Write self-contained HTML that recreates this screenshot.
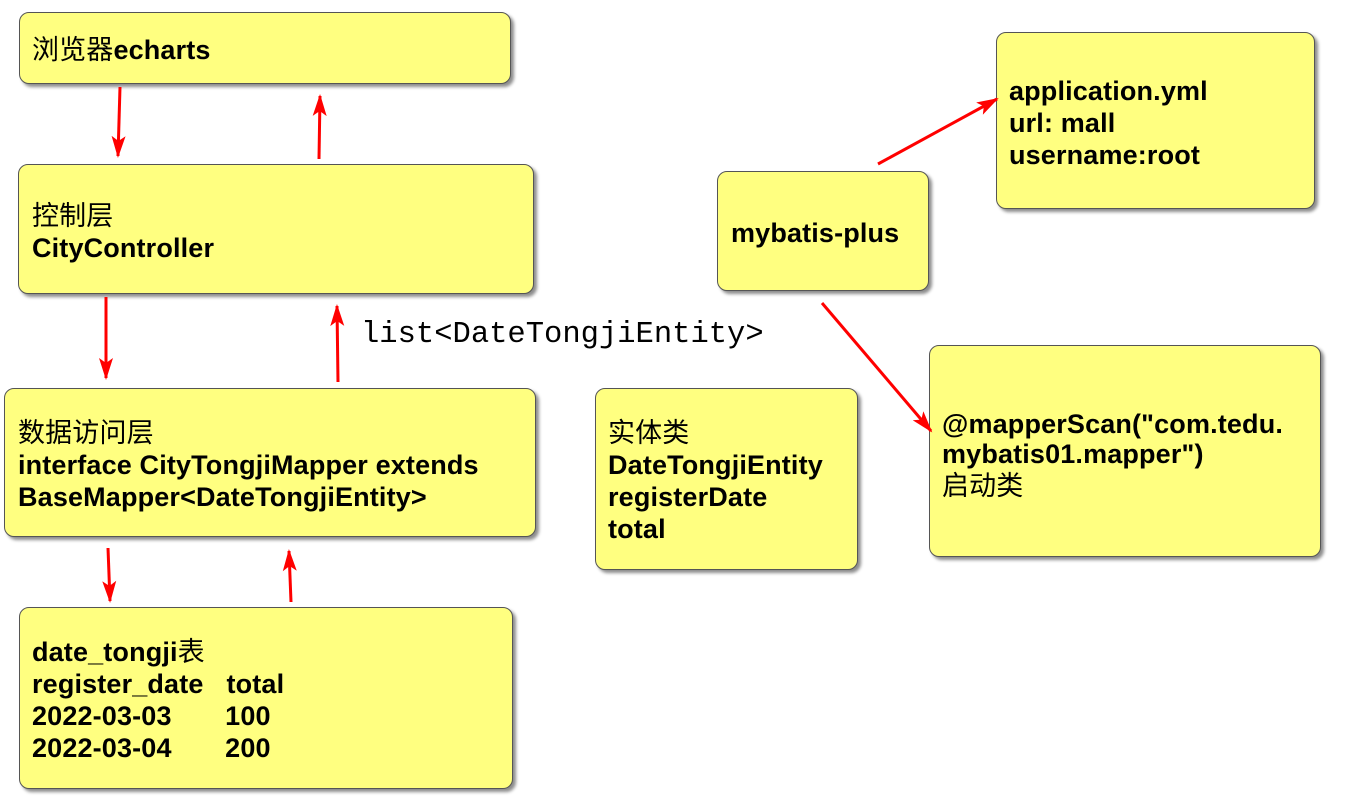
<!DOCTYPE html>
<html><head><meta charset="utf-8"><style>
body{margin:0;width:1363px;height:802px;background:#fff;position:relative;overflow:hidden;font-family:"Liberation Sans","Noto Sans CJK SC",sans-serif;}
.b{position:absolute;background:#ffff80;border:1px solid #555;border-radius:10px;box-shadow:3px 3px 3px rgba(0,0,0,0.45);box-sizing:border-box;}
.t{position:absolute;font-size:27px;font-weight:bold;line-height:30px;white-space:pre;color:#000;letter-spacing:0.15px;}
.c{font-weight:normal;}
</style></head><body>
<div class="b" style="left:19px;top:12px;width:492px;height:72px"></div>
<div class="b" style="left:18px;top:164px;width:516px;height:130px"></div>
<div class="b" style="left:4px;top:388px;width:532px;height:149px"></div>
<div class="b" style="left:19px;top:607px;width:494px;height:182px"></div>
<div class="b" style="left:717px;top:171px;width:212px;height:120px"></div>
<div class="b" style="left:996px;top:32px;width:319px;height:177px"></div>
<div class="b" style="left:595px;top:388px;width:263px;height:182px"></div>
<div class="b" style="left:929px;top:345px;width:392px;height:212px"></div>

<div class="t" style="left:32px;top:35px"><span class="c">浏览器</span>echarts</div>
<div class="t c" style="left:32px;top:201px">控制层</div>
<div class="t" style="left:32px;top:233px">CityController</div>
<div class="t c" style="left:18px;top:418px">数据访问层</div>
<div class="t" style="left:18px;top:450px">interface CityTongjiMapper extends</div>
<div class="t" style="left:18px;top:482px">BaseMapper&lt;DateTongjiEntity&gt;</div>
<div class="t" style="left:32px;top:637px">date_tongji<span class="c">表</span></div>
<div class="t" style="left:32px;top:669px">register_date   total</div>
<div class="t" style="left:32px;top:701px">2022-03-03       100</div>
<div class="t" style="left:32px;top:733px">2022-03-04       200</div>
<div class="t" style="left:731px;top:218px">mybatis-plus</div>
<div class="t" style="left:1009px;top:76px">application.yml</div>
<div class="t" style="left:1009px;top:108px">url: mall</div>
<div class="t" style="left:1009px;top:140px">username:root</div>
<div class="t c" style="left:608px;top:418px">实体类</div>
<div class="t" style="left:608px;top:450px">DateTongjiEntity</div>
<div class="t" style="left:608px;top:482px">registerDate</div>
<div class="t" style="left:608px;top:514px">total</div>
<div class="t" style="left:942px;top:409px">@mapperScan("com.tedu.</div>
<div class="t" style="left:942px;top:439px">mybatis01.mapper")</div>
<div class="t c" style="left:942px;top:471px">启动类</div>
<div style="position:absolute;left:361px;top:317px;font-family:'Liberation Mono',monospace;font-size:30.5px;line-height:36px;white-space:pre">list&lt;DateTongjiEntity&gt;</div>

<svg width="1363" height="802" style="position:absolute;left:0;top:0">
<defs><marker id="m" markerWidth="22" markerHeight="16" refX="20" refY="8" orient="auto" markerUnits="userSpaceOnUse" viewBox="0 0 22 16"><path d="M0,1 L22,8 L0,15 L5,8 z" fill="#f00"/></marker></defs>
<g stroke="#f00" stroke-width="3" fill="none" marker-end="url(#m)">
<line x1="120" y1="87" x2="118" y2="156"/>
<line x1="319" y1="159" x2="320" y2="96"/>
<line x1="106" y1="297" x2="106" y2="378"/>
<line x1="338" y1="382" x2="337" y2="306"/>
<line x1="108" y1="548" x2="110" y2="601"/>
<line x1="291" y1="602" x2="289" y2="551"/>
<line x1="878" y1="164" x2="997" y2="99"/>
<line x1="822" y1="303" x2="931" y2="431"/>
</g></svg>
</body></html>
